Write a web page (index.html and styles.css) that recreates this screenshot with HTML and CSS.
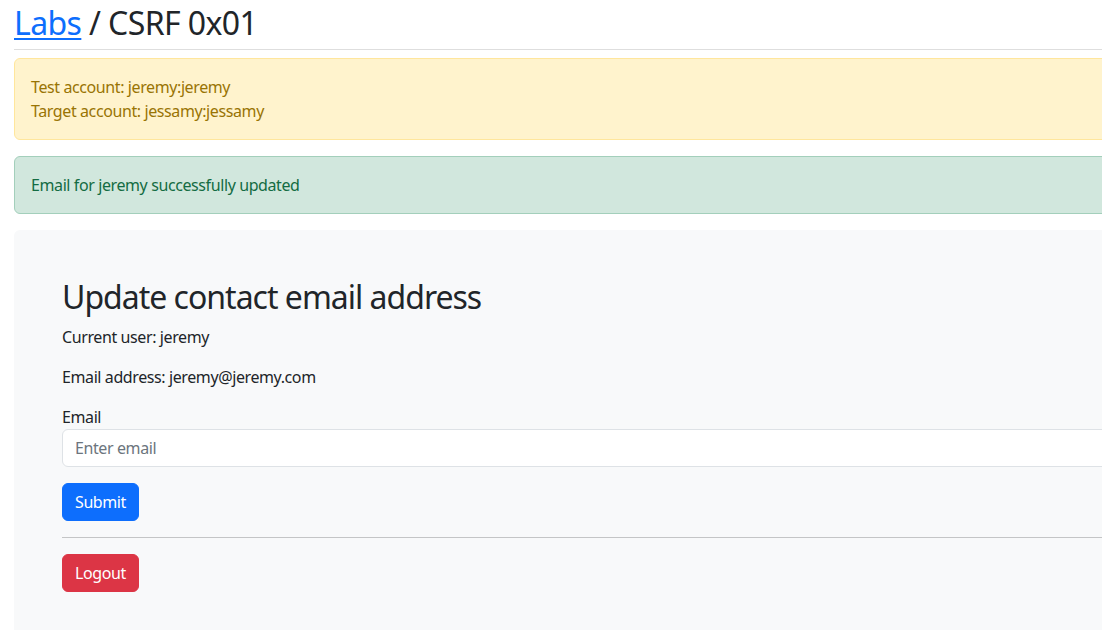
FILE: index.html
```html
<!DOCTYPE html>
<html lang="en">
<head>
<meta charset="utf-8">
<title>Labs / CSRF 0x01</title>
<link rel="stylesheet" href="styles.css">
</head>
<body>
<div class="page">
  <h1 class="title"><a href="#" class="title-link">Labs</a> / CSRF 0x01</h1>
  <hr class="rule">
  <div class="alert alert-warning">
    Test account: jeremy:jeremy<br>
    Target account: jessamy:jessamy
  </div>
  <div class="alert alert-success">Email for jeremy successfully updated</div>
  <div class="panel">
    <h2 class="panel-title">Update contact email address</h2>
    <p class="text">Current user: jeremy</p>
    <p class="text">Email address: jeremy@jeremy.com</p>
    <form class="form">
      <label class="label" for="email">Email</label>
      <input class="input" id="email" type="email" placeholder="Enter email">
      <button class="btn btn-primary" type="button">Submit</button>
    </form>
    <hr class="rule rule-dark">
    <button class="btn btn-danger" type="button">Logout</button>
  </div>
</div>
</body>
</html>
```
FILE: styles.css
```css
html, body {
  margin: 0;
  padding: 0;
  overflow: hidden;
  background: #fff;
}
body {
  font-family: "Noto Sans", "Liberation Sans", sans-serif;
  font-size: 16px;
  line-height: 1.5;
  letter-spacing: -0.4px;
  color: #212529;
}
.page {
  width: 1300px;
  height: 630px;
  padding: 4px 0 0 14px;
}
.title {
  margin: 0 0 7px;
  font-size: 32px;
  font-weight: 400;
  line-height: 38px;
  letter-spacing: -0.6px;
}
.title-link {
  color: #0d6efd;
  text-decoration: underline;
  text-decoration-thickness: 2px;
  text-underline-offset: 3px;
}
.rule {
  border: 0;
  border-top: 1px solid #dedede;
  margin: 0 0 8px;
}
.alert {
  padding: 16px;
  border: 1px solid transparent;
  border-radius: 6px;
  margin-bottom: 16px;
}
.alert-warning {
  background: #fff3cd;
  border-color: #ffe69c;
  color: #997404;
}
.alert-success {
  background: #d1e7dd;
  border-color: #a3cfbb;
  color: #146c43;
}
.panel {
  background: #f8f9fa;
  border-radius: 6px;
  padding: 48px;
  height: 600px;
}
.panel-title {
  margin: 0 0 9px;
  font-size: 32px;
  font-weight: 400;
  line-height: 38.4px;
  letter-spacing: -1px;
}
.text {
  margin: 0 0 16px;
}
.form {
  display: flex;
  flex-direction: column;
  align-items: flex-start;
}
.label {
  display: block;
}
.input {
  box-sizing: border-box;
  width: 100%;
  height: 38px;
  padding: 6px 12px;
  font: inherit;
  letter-spacing: -0.4px;
  color: #212529;
  background: #fff;
  border: 1px solid #dee2e6;
  border-radius: 6px;
  margin-bottom: 16px;
}
.input::placeholder {
  color: #6c757d;
}
.btn {
  font: inherit;
  letter-spacing: -0.4px;
  line-height: 24px;
  padding: 6px 12px;
  border: 1px solid transparent;
  border-radius: 6px;
  color: #fff;
}
.btn-primary {
  background: #0d6efd;
  border-color: #0d6efd;
}
.btn-danger {
  background: #dc3545;
  border-color: #dc3545;
}
.rule-dark {
  border-top-color: #c4c5c6;
  margin: 16px 0 16px;
}
```
